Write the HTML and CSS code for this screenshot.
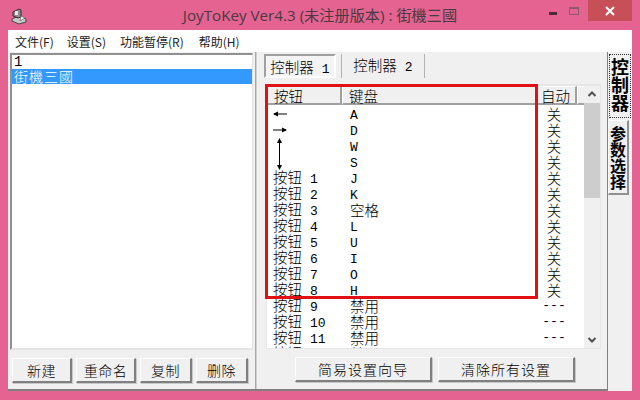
FILE: index.html
```html
<!DOCTYPE html>
<html lang="zh-CN">
<head>
  <meta charset="UTF-8">
  <title>JoyToKey</title>
  <link rel="stylesheet" href="styles.css">
</head>
<body>
  <div class="window">
    <div class="titlebar">
      <svg class="app-icon" width="18" height="18" viewBox="0 0 18 18">
        <path d="M2 12 L9 9 L16 12 L16 15 L9 17 L2 14 Z" fill="#c8c8c8" stroke="#444"/>
        <path d="M3 5 L9 2 L11 3 L11 10 L8 11 L3 9 Z" fill="#8a8a8a" stroke="#333"/>
        <rect x="5" y="4" width="3" height="4" fill="#e8e8e8"/>
        <path d="M11 9 L15 11 L10 14 Z" fill="#f4f4f4" stroke="#555" stroke-width="0.6"/>
      </svg>
      <div class="title">JoyToKey Ver4.3 (未注册版本) : 街機三國</div>
      <div class="controls">
        <div class="btn-min"></div>
        <div class="btn-max"></div>
        <div class="btn-close">
          <svg width="10" height="10" viewBox="0 0 10 10"><path d="M1 1 L9 9 M9 1 L1 9" stroke="#fff" stroke-width="2"/></svg>
        </div>
      </div>
    </div>

    <div class="client">
      <div class="menu">
        <span class="menu-item">文件(F)</span>
        <span class="menu-item">设置(S)</span>
        <span class="menu-item pause">功能暂停(R)</span>
        <span class="menu-item">帮助(H)</span>
      </div>

      <div class="body">
        <div class="main">
          <div class="left">
            <div class="profiles">
              <div class="profile">1</div>
              <div class="profile selected">街機三國</div>
            </div>
            <div class="left-buttons">
              <div class="btn w60">新建</div>
              <div class="btn w60">重命名</div>
              <div class="btn w52">复制</div>
              <div class="btn w52">删除</div>
            </div>
          </div>

          <div class="splitter"></div>

          <div class="right">
            <div class="tabs">
              <div class="tab active">控制器 <span class="num">1</span></div>
              <div class="tab second">控制器 <span class="num">2</span></div>
            </div>

            <div class="listview">
              <div class="list-main">
                <div class="header">
                  <div class="hcell col1">按钮</div>
                  <div class="hcell col2">键盘</div>
                  <div class="hcell col3">自动</div>
                  <div class="hcell col4"></div>
                </div>
                <div class="rows">
                  <div class="row">
                    <div class="cell c1"><svg width="14" height="8" viewBox="0 0 14 8"><path d="M1 4 H14" stroke="#000"/><path d="M0 4 L5 1.5 V6.5 Z" fill="#000"/></svg></div>
                    <div class="cell c2 mono">A</div><div class="cell c3">关</div>
                  </div>
                  <div class="row">
                    <div class="cell c1"><svg width="14" height="8" viewBox="0 0 14 8"><path d="M0 4 H13" stroke="#000"/><path d="M14 4 L9 1.5 V6.5 Z" fill="#000"/></svg></div>
                    <div class="cell c2 mono">D</div><div class="cell c3">关</div>
                  </div>
                  <div class="row">
                    <div class="cell c1"><svg width="14" height="16" viewBox="0 0 14 16"><path d="M6.5 2 V16" stroke="#000"/><path d="M6.5 0 L4 5 H9 Z" fill="#000"/></svg></div>
                    <div class="cell c2 mono">W</div><div class="cell c3">关</div>
                  </div>
                  <div class="row">
                    <div class="cell c1"><svg width="14" height="16" viewBox="0 0 14 16"><path d="M6.5 0 V14" stroke="#000"/><path d="M6.5 16 L4 11 H9 Z" fill="#000"/></svg></div>
                    <div class="cell c2 mono">S</div><div class="cell c3">关</div>
                  </div>
                  <div class="row"><div class="cell c1">按钮 <span class="num">1</span></div><div class="cell c2 mono">J</div><div class="cell c3">关</div></div>
                  <div class="row"><div class="cell c1">按钮 <span class="num">2</span></div><div class="cell c2 mono">K</div><div class="cell c3">关</div></div>
                  <div class="row"><div class="cell c1">按钮 <span class="num">3</span></div><div class="cell c2">空格</div><div class="cell c3">关</div></div>
                  <div class="row"><div class="cell c1">按钮 <span class="num">4</span></div><div class="cell c2 mono">L</div><div class="cell c3">关</div></div>
                  <div class="row"><div class="cell c1">按钮 <span class="num">5</span></div><div class="cell c2 mono">U</div><div class="cell c3">关</div></div>
                  <div class="row"><div class="cell c1">按钮 <span class="num">6</span></div><div class="cell c2 mono">I</div><div class="cell c3">关</div></div>
                  <div class="row"><div class="cell c1">按钮 <span class="num">7</span></div><div class="cell c2 mono">O</div><div class="cell c3">关</div></div>
                  <div class="row"><div class="cell c1">按钮 <span class="num">8</span></div><div class="cell c2 mono">H</div><div class="cell c3">关</div></div>
                  <div class="row"><div class="cell c1">按钮 <span class="num">9</span></div><div class="cell c2">禁用</div><div class="cell c3 mono">---</div></div>
                  <div class="row"><div class="cell c1">按钮 <span class="num">10</span></div><div class="cell c2">禁用</div><div class="cell c3 mono">---</div></div>
                  <div class="row"><div class="cell c1">按钮 <span class="num">11</span></div><div class="cell c2">禁用</div><div class="cell c3 mono">---</div></div>
                  <div class="row"><div class="cell c1">按钮 <span class="num">12</span></div><div class="cell c2">禁用</div><div class="cell c3 mono">---</div></div>
                </div>
              </div>
              <div class="scrollbar">
                <svg class="arrow" width="16" height="17" viewBox="0 0 16 17"><path d="M4.5 10 L8 6.5 L11.5 10" fill="none" stroke="#505050" stroke-width="2"/></svg>
                <div class="track"><div class="thumb"></div></div>
                <svg class="arrow" width="16" height="17" viewBox="0 0 16 17"><path d="M4.5 7 L8 10.5 L11.5 7" fill="none" stroke="#505050" stroke-width="2"/></svg>
              </div>
              <div class="redbox"></div>
            </div>

            <div class="right-buttons">
              <div class="btn wide">简易设置向导</div>
              <div class="btn wide">清除所有设置</div>
            </div>
          </div>
        </div>

        <div class="vtabs">
          <div class="vtab vtab-active"><span class="vtext">控制器</span></div>
          <div class="vtab vtab-second"><span class="vtext">参数选择</span></div>
        </div>
      </div>
    </div>
  </div>
</body>
</html>
```

FILE: styles.css
```css
* {
  box-sizing: border-box;
}

body {
  margin: 0;
  width: 640px;
  height: 400px;
  overflow: hidden;
  font-family: "Noto Sans CJK SC", sans-serif;
  color: #000;
}

.window {
  width: 640px;
  height: 400px;
  background-color: #e46390;
  padding: 0 8px 9px 8px;
  display: flex;
  flex-direction: column;
}

/* title bar */
.titlebar {
  height: 30px;
  flex: none;
  display: flex;
  align-items: flex-start;
  position: relative;
}

.app-icon {
  margin: 7px 0 0 2px;
  flex: none;
}

.title {
  flex: 1;
  text-align: center;
  font-family: "Open Sans", "Noto Sans CJK SC", sans-serif;
  font-size: 15.2px;
  line-height: 30px;
  color: #4b3a42;
  margin-right: 20px;
  white-space: nowrap;
}

.controls {
  position: absolute;
  top: 0;
  right: 0;
  display: flex;
  align-items: flex-start;
}

.btn-min {
  width: 8px;
  height: 3px;
  background-color: #4a2c38;
  margin: 12px 12px 0 0;
}

.btn-max {
  width: 10px;
  height: 8px;
  border: 1px solid #8c5a70;
  border-top-width: 2px;
  margin: 7px 9px 0 0;
}

.btn-close {
  width: 44px;
  height: 21px;
  background-color: #c75058;
  display: flex;
  align-items: center;
  justify-content: center;
}

/* client area */
.client {
  flex: 1;
  display: flex;
  flex-direction: column;
  background-color: #f0f0f0;
  min-height: 0;
}

.menu {
  height: 22px;
  flex: none;
  background-color: #fff;
  display: flex;
  align-items: center;
  gap: 13px;
  padding-left: 7px;
  font-size: 12px;
  color: #222;
}

.pause {
  margin: 0 2px 0 1px;
}

.body {
  flex: 1;
  display: flex;
  min-height: 0;
}

.main {
  width: 600px;
  display: flex;
  border-right: 1px solid #808080;
  border-bottom: 2px solid #808080;
}

/* left pane */
.left {
  width: 247px;
  flex: none;
  padding: 1px 2px 0 2px;
}

.profiles {
  height: 297px;
  background-color: #fff;
  border: 2px solid #e4e4e4;
  border-top-color: #909090;
  border-left-color: #909090;
  border-right-width: 1px;
  font-size: 14px;
  line-height: 14px;
}

.profile {
  height: 14px;
  padding-left: 2px;
  font-family: "Liberation Mono", "Noto Sans CJK SC", monospace;
}

.selected {
  height: 15px;
  line-height: 15px;
  background-color: #3399ff;
  color: #fff;
  font-family: "Noto Sans CJK SC", sans-serif;
  font-weight: 300;
  letter-spacing: 1px;
}

.left-buttons {
  display: flex;
  gap: 4px;
  padding: 8px 0 0 2px;
}

.btn {
  height: 25px;
  background-color: #f0f0f0;
  border: 1px solid #fff;
  border-right: 2px solid #808080;
  border-bottom: 2px solid #808080;
  display: flex;
  align-items: center;
  justify-content: center;
  font-size: 14px;
  letter-spacing: 0.5px;
  font-weight: 300;
  box-shadow: 1px 1px 0 #c8c8c8;
}

.w60 {
  width: 60px;
}

.w52 {
  width: 52px;
}

.wide {
  width: 137px;
  letter-spacing: 1px;
}

.splitter {
  width: 2px;
  flex: none;
  background-color: #d0d0d0;
  border-left: 1px solid #a8a8a8;
}

/* right pane */
.right {
  flex: 1;
  min-width: 0;
  padding: 2px 6px 0 7px;
}

.tabs {
  display: flex;
  height: 30px;
  font-size: 14.5px;
  font-weight: 300;
}

.tab {
  height: 24px;
  display: flex;
  align-items: baseline;
  gap: 8px;
  line-height: 21px;
}

.active {
  width: 72px;
  justify-content: center;
  border: 2px solid #fff;
  border-top-color: #a0a0a0;
  border-left-color: #a0a0a0;
  background-color: #f4f4f4;
}

.second {
  margin-left: 5px;
  width: 84px;
  justify-content: center;
  border-left: 1px solid #b4b4b4;
  border-right: 1px solid #b4b4b4;
  background-color: transparent;
}

.num {
  font-family: "Liberation Mono", monospace;
  font-size: 13px;
}

.listview {
  position: relative;
  width: 335px;
  height: 265px;
  margin-left: 2px;
  background-color: #fff;
  border: 1px solid #e6e6e6;
  border-top-width: 2px;
  display: flex;
}

.list-main {
  flex: 1;
  min-width: 0;
  display: flex;
  flex-direction: column;
}

.header {
  display: flex;
  height: 19px;
  flex: none;
  background-color: #f0f0f0;
  font-size: 14.5px;
  font-weight: 300;
}

.hcell {
  border: 1px solid #fff;
  border-right: 2px solid #a0a0a0;
  border-bottom: 2px solid #a0a0a0;
  padding-left: 6px;
  line-height: 17px;
  white-space: nowrap;
}

.col1 {
  width: 75px;
}

.col2 {
  width: 195px;
}

.col3 {
  width: 40px;
  padding-left: 3px;
}

.col4 {
  width: 6px;
  border-right: none;
}

.rows {
  flex: 1;
  overflow: hidden;
  font-size: 14.5px;
  font-weight: 300;
  padding-top: 1px;
}

.row {
  display: flex;
  height: 16px;
  align-items: center;
  line-height: 16px;
}

.cell {
  white-space: nowrap;
  display: flex;
  align-items: center;
}

.c1 {
  width: 83px;
  padding-left: 6px;
  align-items: baseline;
  gap: 8px;
}

.c2 {
  width: 184px;
}

.c3 {
  width: 40px;
  justify-content: center;
}

.mono {
  font-family: "Liberation Mono", monospace;
  font-size: 13px;
}

.c2.mono {
  padding-top: 4px;
}

.scrollbar {
  width: 16px;
  flex: none;
  background-color: #f0f0f0;
  display: flex;
  flex-direction: column;
}

.arrow {
  flex: none;
}

.track {
  flex: 1;
}

.thumb {
  height: 95px;
  background-color: #cdcdcd;
}

.redbox {
  position: absolute;
  left: -2px;
  top: -2px;
  width: 273px;
  height: 215px;
  border: 3px solid #e01015;
}

.right-buttons {
  display: flex;
  gap: 6px;
  padding: 8px 0 0 31px;
}

/* vertical tabs */
.vtabs {
  width: 24px;
  flex: none;
  padding-top: 2px;
  display: flex;
  flex-direction: column;
  align-items: flex-start;
}

.vtab {
  background-color: #f0f0f0;
  display: flex;
  justify-content: center;
  font-weight: 700;
}

.vtext {
  writing-mode: vertical-rl;
  text-orientation: upright;
  white-space: nowrap;
}

.vtab-active {
  width: 22px;
  height: 64px;
  margin-left: 1px;
  border: 1px dotted #303030;
  font-size: 18px;
  padding-top: 3px;
}

.vtab-second {
  width: 21px;
  height: 75px;
  margin-top: 2px;
  border: 1px solid #909090;
  border-top-color: #fff;
  border-left-color: #fff;
  border-right-width: 2px;
  border-bottom-width: 2px;
  font-size: 16px;
  padding-top: 5px;
}
```
